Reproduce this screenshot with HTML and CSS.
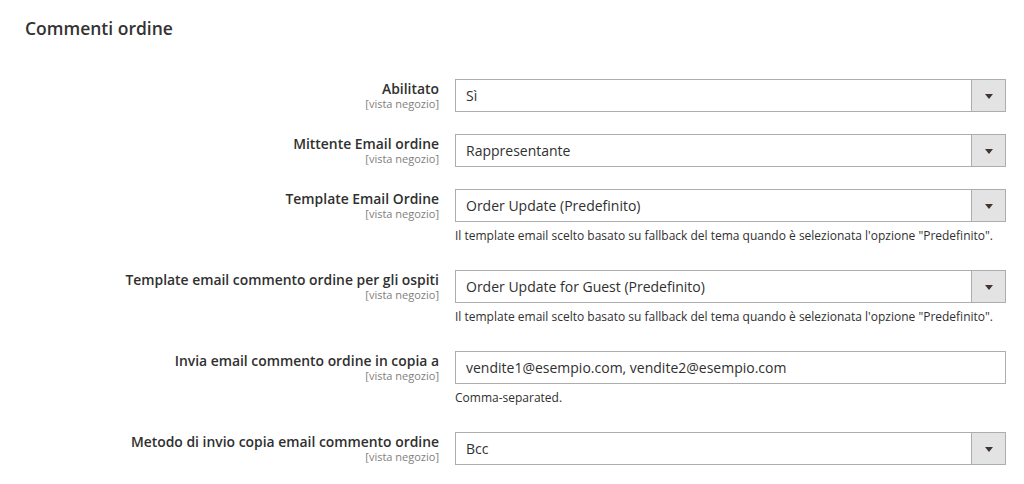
FILE: index.html
```html
<!DOCTYPE html>
<html lang="it">
<head>
    <meta charset="UTF-8">
    <meta name="viewport" content="width=device-width, initial-scale=1.0">
    <title>Commenti ordine</title>
    <link rel="stylesheet" href="styles.css">
</head>
<body>
    <div class="section">
        <h2 class="section-title">Commenti ordine</h2>

        <div class="fields">
            <div class="field">
                <div class="label">
                    <label for="enabled">Abilitato</label>
                    <span class="scope">[vista negozio]</span>
                </div>
                <div class="control">
                    <div class="select-wrap">
                        <select id="enabled">
                            <option>Sì</option>
                            <option>No</option>
                        </select>
                        <span class="select-btn"><span class="arrow"></span></span>
                    </div>
                </div>
            </div>

            <div class="field">
                <div class="label">
                    <label for="sender">Mittente Email ordine</label>
                    <span class="scope">[vista negozio]</span>
                </div>
                <div class="control">
                    <div class="select-wrap">
                        <select id="sender">
                            <option>Rappresentante</option>
                        </select>
                        <span class="select-btn"><span class="arrow"></span></span>
                    </div>
                </div>
            </div>

            <div class="field">
                <div class="label">
                    <label for="template">Template Email Ordine</label>
                    <span class="scope">[vista negozio]</span>
                </div>
                <div class="control">
                    <div class="select-wrap">
                        <select id="template">
                            <option>Order Update (Predefinito)</option>
                        </select>
                        <span class="select-btn"><span class="arrow"></span></span>
                    </div>
                    <p class="note">Il template email scelto basato su fallback del tema quando è selezionata l'opzione "Predefinito".</p>
                </div>
            </div>

            <div class="field">
                <div class="label">
                    <label for="guest_template">Template email commento ordine per gli ospiti</label>
                    <span class="scope">[vista negozio]</span>
                </div>
                <div class="control">
                    <div class="select-wrap">
                        <select id="guest_template">
                            <option>Order Update for Guest (Predefinito)</option>
                        </select>
                        <span class="select-btn"><span class="arrow"></span></span>
                    </div>
                    <p class="note">Il template email scelto basato su fallback del tema quando è selezionata l'opzione "Predefinito".</p>
                </div>
            </div>

            <div class="field">
                <div class="label">
                    <label for="copy_to">Invia email commento ordine in copia a</label>
                    <span class="scope">[vista negozio]</span>
                </div>
                <div class="control">
                    <input type="text" id="copy_to" value="vendite1@esempio.com, vendite2@esempio.com">
                    <p class="note">Comma-separated.</p>
                </div>
            </div>

            <div class="field">
                <div class="label">
                    <label for="copy_method">Metodo di invio copia email commento ordine</label>
                    <span class="scope">[vista negozio]</span>
                </div>
                <div class="control">
                    <div class="select-wrap">
                        <select id="copy_method">
                            <option>Bcc</option>
                            <option>Email separata</option>
                        </select>
                        <span class="select-btn"><span class="arrow"></span></span>
                    </div>
                </div>
            </div>
        </div>
    </div>
</body>
</html>
```

FILE: styles.css
```css
body {
    margin: 0;
    font-family: "Open Sans", Arial, sans-serif;
    color: #303030;
    background: #fff;
}
.section {
    padding: 0 18px 0 25px;
}
.section-title {
    margin: 0;
    padding-top: 17px;
    font-size: 17.5px;
    line-height: 22px;
    font-weight: 600;
    color: #333;
}
.fields {
    padding-top: 40px;
}
.field {
    display: grid;
    grid-template-columns: 414px 1fr;
    column-gap: 16px;
    margin-bottom: 22px;
}
.label {
    text-align: right;
    padding-top: 2px;
}
.label label {
    display: block;
    font-size: 13.9px;
    line-height: 16px;
    font-weight: 600;
    color: #303030;
}
.scope {
    display: block;
    font-size: 11px;
    line-height: 13px;
    color: #808080;
}
.select-wrap {
    display: flex;
    height: 33px;
    box-sizing: border-box;
    border: 1px solid #adadad;
    background: #fff;
}
.select-wrap select {
    flex: 1;
    appearance: none;
    -webkit-appearance: none;
    border: none;
    background: transparent;
    padding: 0 10px;
    font-family: inherit;
    font-size: 14px;
    color: #303030;
    outline: none;
}
.select-btn {
    width: 33px;
    border-left: 1px solid #adadad;
    background: #e3e3e3;
    display: flex;
    align-items: center;
    justify-content: center;
}
.arrow {
    width: 0;
    height: 0;
    margin-top: 1px;
    border-left: 4px solid transparent;
    border-right: 4px solid transparent;
    border-top: 5px solid #41362f;
}
input[type="text"] {
    display: block;
    width: 100%;
    height: 33px;
    box-sizing: border-box;
    border: 1px solid #adadad;
    padding: 0 10px;
    font-family: inherit;
    font-size: 14px;
    color: #303030;
    outline: none;
}
.note {
    margin: 5px 0 3px;
    font-size: 12px;
    line-height: 18px;
    color: #303030;
}
```
